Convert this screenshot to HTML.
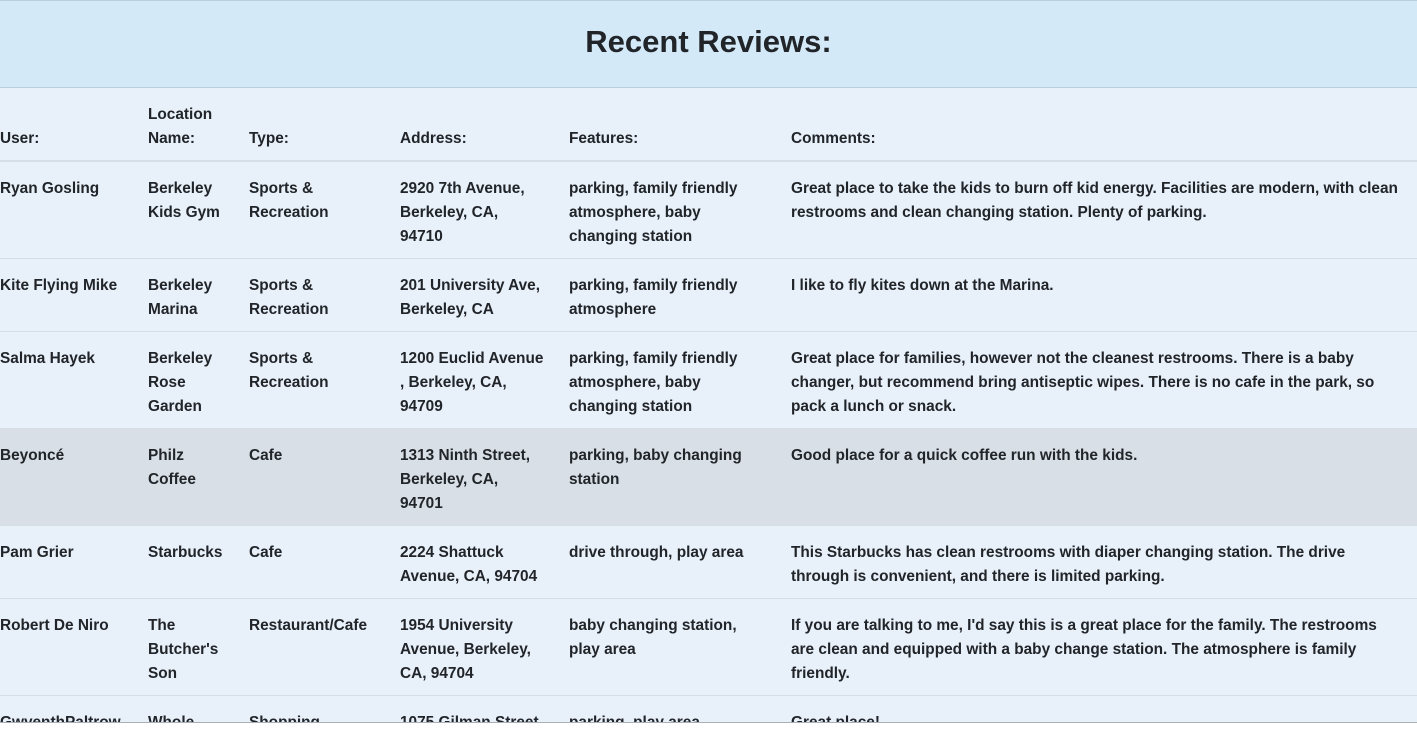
<!DOCTYPE html>
<html><head><meta charset="utf-8"><style>
*{margin:0;padding:0;box-sizing:border-box}
html,body{width:1417px;height:731px;overflow:hidden}
body{background:#fff;font-family:"Liberation Sans",sans-serif;font-weight:bold;color:#212529;font-size:15.4px;position:relative}
.hdr{position:absolute;left:0;top:0;width:1417px;height:88px;background:#d3e9f8;border-top:1px solid #b8cfe0;border-bottom:1px solid #b8cfe0;text-align:center;font-size:31px;line-height:82px}
.wrap{position:absolute;left:0;top:88px;width:1417px;height:635px;overflow:hidden;background:#e8f0f9;border-bottom:1px solid #a9b0b8}
.row{position:absolute;left:0;width:1417px;border-bottom:1px solid #d5dde5}
.c{position:absolute;line-height:24px;white-space:nowrap}
</style></head><body>
<div class="hdr">Recent Reviews:</div>
<div class="wrap">
<div class="row" style="top:0;height:74px;border-bottom:2px solid #d5dde5">
<div class="c" style="left:0;top:39px">User:</div>
<div class="c" style="left:148px;top:15px">Location<br>Name:</div>
<div class="c" style="left:249px;top:39px">Type:</div>
<div class="c" style="left:400px;top:39px">Address:</div>
<div class="c" style="left:569px;top:39px">Features:</div>
<div class="c" style="left:791px;top:39px">Comments:</div>
</div>
<div class="row" style="top:74px;height:97px">
<div class="c" style="left:0;top:15px">Ryan Gosling</div>
<div class="c" style="left:148px;top:15px">Berkeley<br>Kids Gym</div>
<div class="c" style="left:249px;top:15px">Sports &amp;<br>Recreation</div>
<div class="c" style="left:400px;top:15px">2920 7th Avenue,<br>Berkeley, CA,<br>94710</div>
<div class="c" style="left:569px;top:15px">parking, family friendly<br>atmosphere, baby<br>changing station</div>
<div class="c" style="left:791px;top:15px">Great place to take the kids to burn off kid energy. Facilities are modern, with clean<br>restrooms and clean changing station. Plenty of parking.</div>
</div>
<div class="row" style="top:171px;height:73px">
<div class="c" style="left:0;top:15px">Kite Flying Mike</div>
<div class="c" style="left:148px;top:15px">Berkeley<br>Marina</div>
<div class="c" style="left:249px;top:15px">Sports &amp;<br>Recreation</div>
<div class="c" style="left:400px;top:15px">201 University Ave,<br>Berkeley, CA</div>
<div class="c" style="left:569px;top:15px">parking, family friendly<br>atmosphere</div>
<div class="c" style="left:791px;top:15px">I like to fly kites down at the Marina.</div>
</div>
<div class="row" style="top:244px;height:97px">
<div class="c" style="left:0;top:15px">Salma Hayek</div>
<div class="c" style="left:148px;top:15px">Berkeley<br>Rose<br>Garden</div>
<div class="c" style="left:249px;top:15px">Sports &amp;<br>Recreation</div>
<div class="c" style="left:400px;top:15px">1200 Euclid Avenue<br>, Berkeley, CA,<br>94709</div>
<div class="c" style="left:569px;top:15px">parking, family friendly<br>atmosphere, baby<br>changing station</div>
<div class="c" style="left:791px;top:15px">Great place for families, however not the cleanest restrooms. There is a baby<br>changer, but recommend bring antiseptic wipes. There is no cafe in the park, so<br>pack a lunch or snack.</div>
</div>
<div class="row" style="top:341px;height:97px;background:#d8dfe6">
<div class="c" style="left:0;top:15px">Beyoncé</div>
<div class="c" style="left:148px;top:15px">Philz<br>Coffee</div>
<div class="c" style="left:249px;top:15px">Cafe</div>
<div class="c" style="left:400px;top:15px">1313 Ninth Street,<br>Berkeley, CA,<br>94701</div>
<div class="c" style="left:569px;top:15px">parking, baby changing<br>station</div>
<div class="c" style="left:791px;top:15px">Good place for a quick coffee run with the kids.</div>
</div>
<div class="row" style="top:438px;height:73px">
<div class="c" style="left:0;top:15px">Pam Grier</div>
<div class="c" style="left:148px;top:15px">Starbucks</div>
<div class="c" style="left:249px;top:15px">Cafe</div>
<div class="c" style="left:400px;top:15px">2224 Shattuck<br>Avenue, CA, 94704</div>
<div class="c" style="left:569px;top:15px">drive through, play area</div>
<div class="c" style="left:791px;top:15px">This Starbucks has clean restrooms with diaper changing station. The drive<br>through is convenient, and there is limited parking.</div>
</div>
<div class="row" style="top:511px;height:97px">
<div class="c" style="left:0;top:15px">Robert De Niro</div>
<div class="c" style="left:148px;top:15px">The<br>Butcher's<br>Son</div>
<div class="c" style="left:249px;top:15px">Restaurant/Cafe</div>
<div class="c" style="left:400px;top:15px">1954 University<br>Avenue, Berkeley,<br>CA, 94704</div>
<div class="c" style="left:569px;top:15px">baby changing station,<br>play area</div>
<div class="c" style="left:791px;top:15px">If you are talking to me, I'd say this is a great place for the family. The restrooms<br>are clean and equipped with a baby change station. The atmosphere is family<br>friendly.</div>
</div>
<div class="row" style="top:608px;height:27px;border:none">
<div class="c" style="left:0;top:15px">GwyenthPaltrow</div>
<div class="c" style="left:148px;top:15px">Whole</div>
<div class="c" style="left:249px;top:15px">Shopping</div>
<div class="c" style="left:400px;top:15px">1075 Gilman Street</div>
<div class="c" style="left:569px;top:15px">parking, play area</div>
<div class="c" style="left:791px;top:15px">Great place!</div>
</div>
</div>
</body></html>
